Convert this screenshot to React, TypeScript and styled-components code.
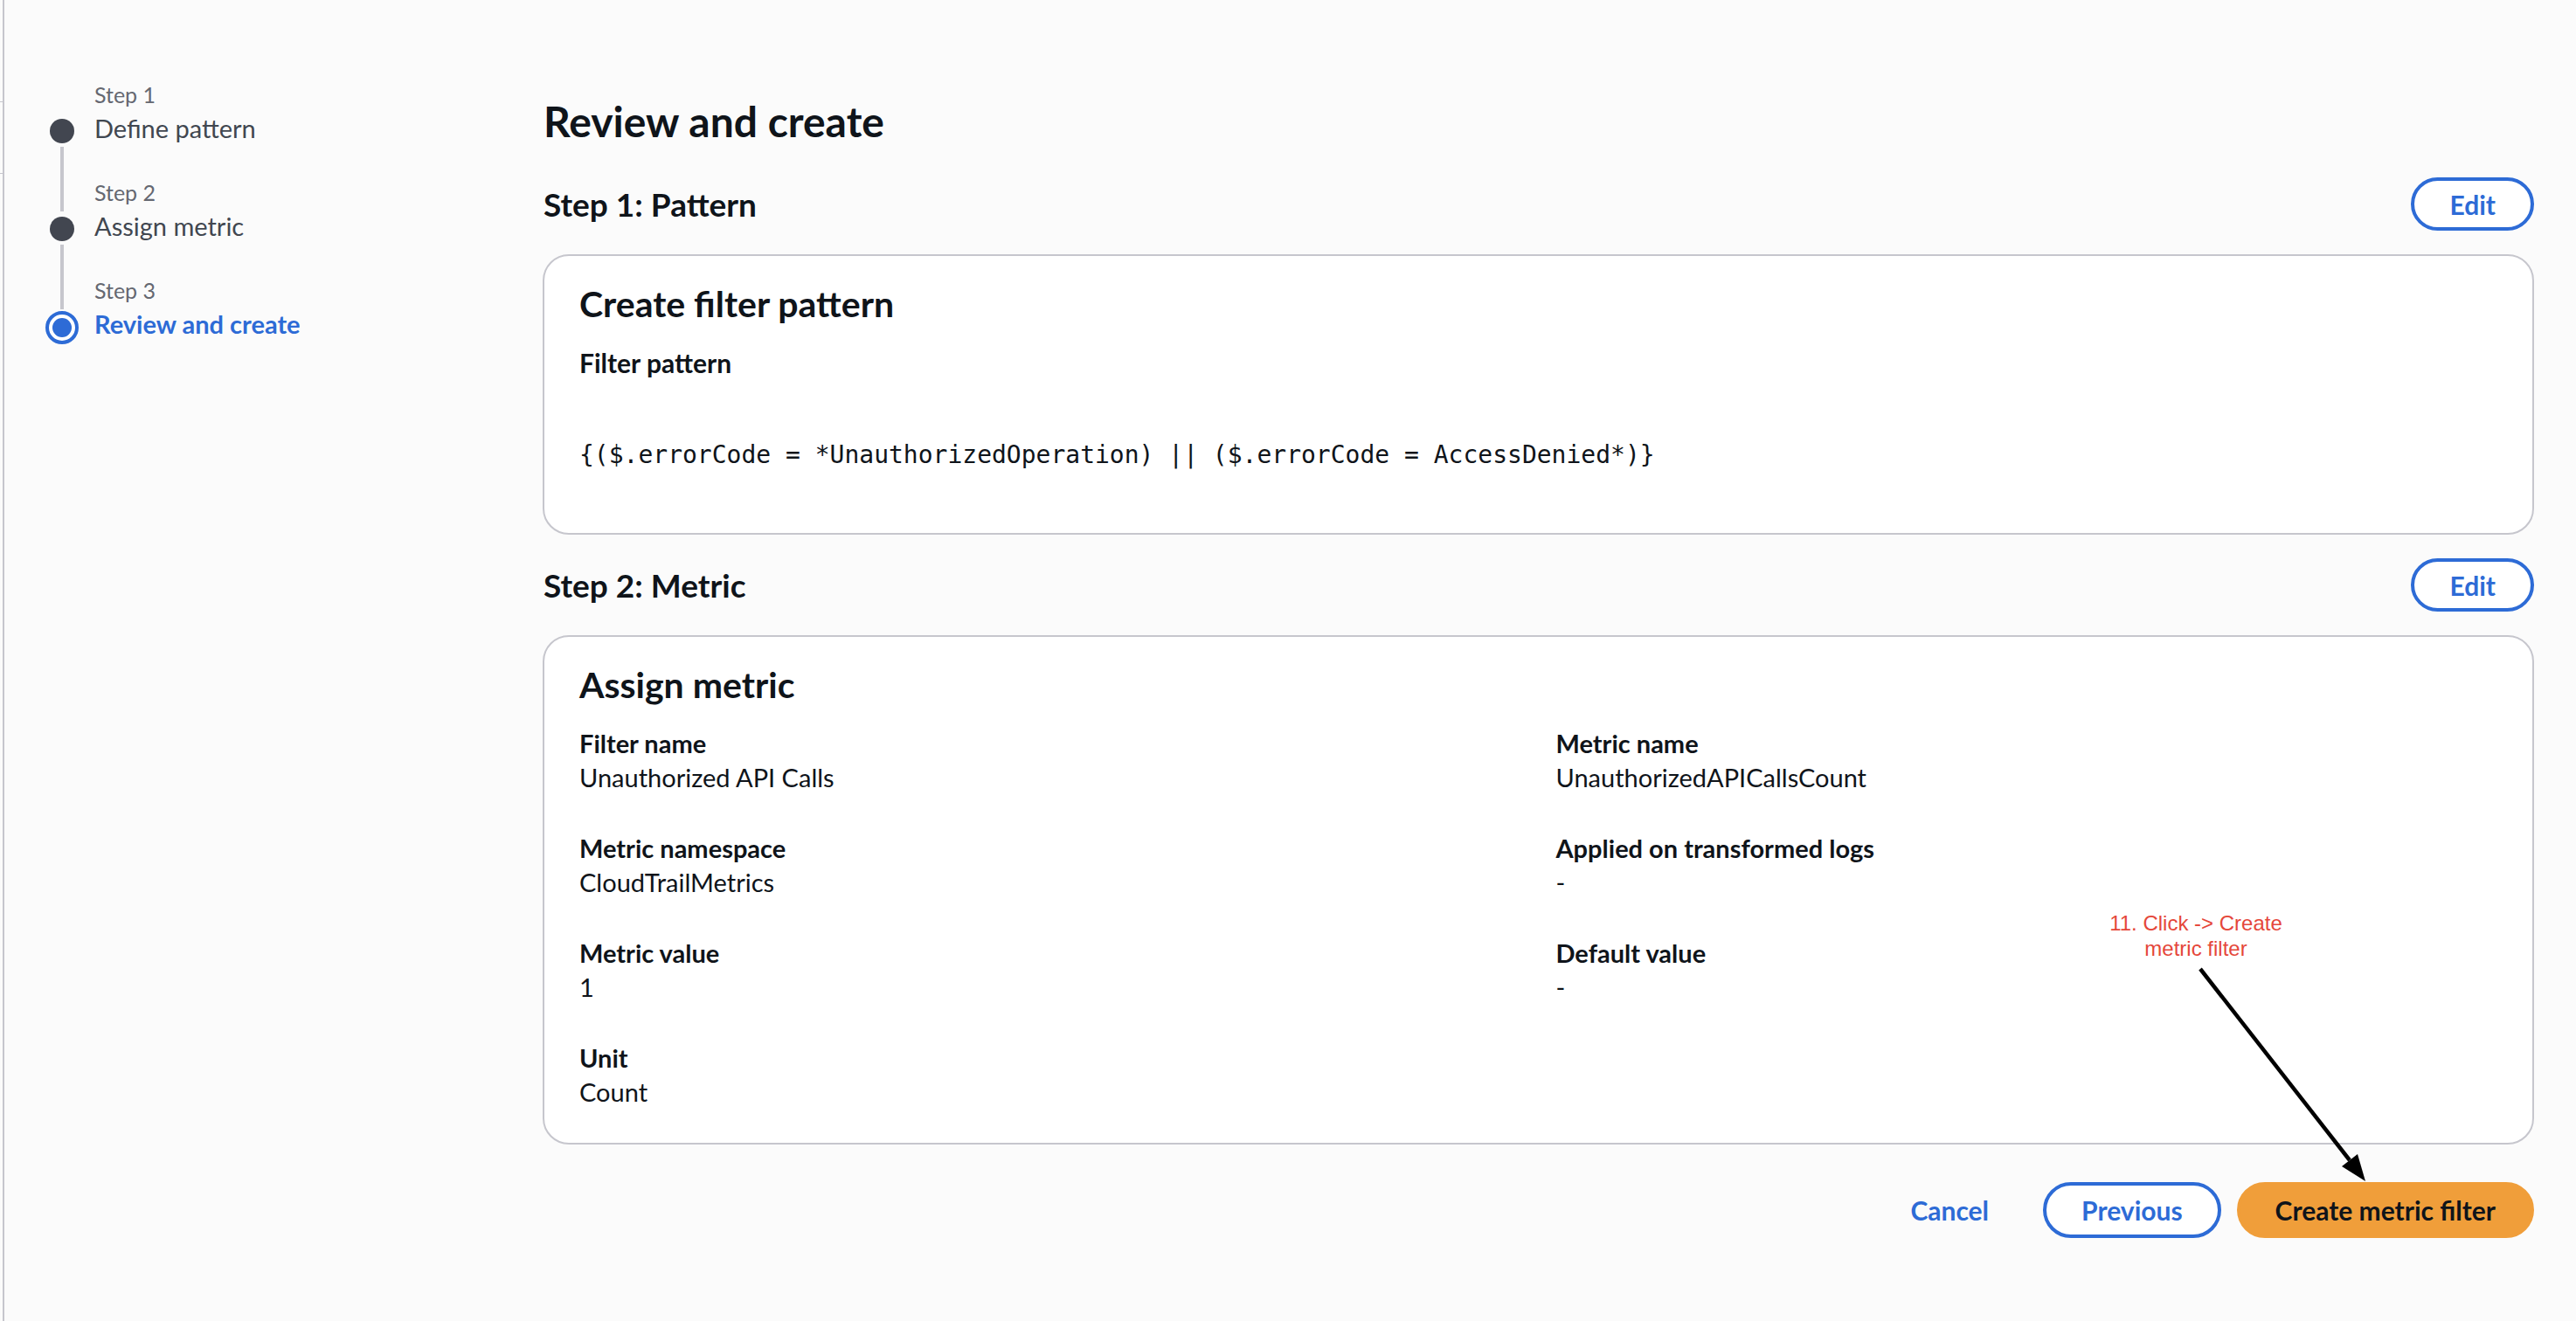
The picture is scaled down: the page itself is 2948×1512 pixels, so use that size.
import React from "react";
import styled, { createGlobalStyle } from "styled-components";

const BLUE = "#2d6bd6";
const BORDER = "#c6c6cd";

const GlobalStyle = createGlobalStyle`
  html, body {
    margin: 0;
    padding: 0;
    background: #fbfbfb;
  }
  body {
    font-family: Lato, "Open Sans", "Noto Sans", sans-serif;
    color: #0f141a;
  }
  *, *::before, *::after { box-sizing: border-box; }
`;

const Shell = styled.div`
  position: relative;
  display: flex;
  width: 2948px;
  height: 1512px;
  overflow: hidden;
  background: #fbfbfb;
`;

const Gutter = styled.div`
  flex: 0 0 3px;
  display: flex;
  flex-direction: column;
  gap: 81px;
  padding-top: 116px;
`;

const Tick = styled.span`
  display: block;
  height: 1px;
  background: ${BORDER};
`;

const Page = styled.div`
  flex: 1;
  display: flex;
  border-left: 2px solid ${BORDER};
  padding-right: 48px;
`;

/* ---------- Side navigation (wizard steps) ---------- */

const Nav = styled.nav`
  flex: 0 0 616px;
  padding: 94px 0 0 47px;
`;

const StepList = styled.ol`
  list-style: none;
  margin: 0;
  padding: 0;
`;

const StepItem = styled.li`
  display: grid;
  grid-template-columns: 38px auto;
  grid-template-rows: auto auto;
  column-gap: 18px;
`;

const Connector = styled.span`
  grid-column: 1;
  grid-row: 1;
  justify-self: center;
  align-self: stretch;
  width: 4px;
  margin-bottom: 2px;
  background: ${BORDER};
`;

const StepLabel = styled.span<{ $first?: boolean }>`
  grid-column: 2;
  grid-row: 1;
  padding: ${(p) => (p.$first ? 0 : 38)}px 0 10px;
  font-size: 25px;
  line-height: 28px;
  color: #656871;
`;

const Indicator = styled.span`
  grid-column: 1;
  grid-row: 2;
  justify-self: center;
  align-self: center;
  display: flex;
  align-items: center;
  justify-content: center;
`;

const Dot = styled.span`
  display: block;
  width: 28px;
  height: 28px;
  border-radius: 50%;
  background: #424650;
`;

const ActiveRing = styled.span`
  display: flex;
  align-items: center;
  justify-content: center;
  width: 38px;
  height: 38px;
  border-radius: 50%;
  border: 4px solid ${BLUE};
  background: #ffffff;
`;

const ActiveDot = styled.span`
  display: block;
  width: 22px;
  height: 22px;
  border-radius: 50%;
  background: ${BLUE};
`;

const StepTitle = styled.span<{ $active?: boolean }>`
  grid-column: 2;
  grid-row: 2;
  padding-bottom: 6px;
  font-size: 29px;
  line-height: 30px;
  font-weight: ${(p) => (p.$active ? 700 : 400)};
  color: ${(p) => (p.$active ? BLUE : "#414750")};
`;

/* ---------- Main content ---------- */

const Main = styled.main`
  flex: 1;
  display: flex;
  flex-direction: column;
  padding-top: 109px;
  min-width: 0;
`;

const PageTitle = styled.h1`
  margin: 0 0 0 1px;
  font-size: 48px;
  line-height: 60px;
  font-weight: 700;
`;

const SectionHeader = styled.div<{ $top: number }>`
  display: flex;
  align-items: center;
  justify-content: space-between;
  margin-top: ${(p) => p.$top}px;
`;

const SectionTitle = styled.h2`
  margin: 0 0 0 1px;
  font-size: 37px;
  line-height: 40px;
  font-weight: 700;
`;

const OutlineButton = styled.button<{ $h: number }>`
  height: ${(p) => p.$h}px;
  padding: 0 40px;
  border: 4px solid ${BLUE};
  border-radius: 999px;
  background: #ffffff;
  color: ${BLUE};
  font-family: inherit;
  font-size: 30px;
  font-weight: 700;
  cursor: pointer;
`;

const LinkButton = styled.button`
  height: 64px;
  padding: 0 44px;
  border: none;
  background: transparent;
  color: ${BLUE};
  font-family: inherit;
  font-size: 30px;
  font-weight: 700;
  cursor: pointer;
`;

const PrimaryButton = styled.button`
  height: 64px;
  padding: 0 40px;
  border: 4px solid #f09e3a;
  border-radius: 999px;
  background: #f09e3a;
  color: #0f141a;
  font-family: inherit;
  font-size: 30px;
  font-weight: 700;
  cursor: pointer;
`;

const Card = styled.section<{ $pb: number }>`
  margin-top: 27px;
  border: 2px solid ${BORDER};
  border-radius: 30px;
  background: #ffffff;
  padding: 31px 40px ${(p) => p.$pb}px;
`;

const CardTitle = styled.h3`
  margin: 0;
  font-size: 41px;
  line-height: 48px;
  font-weight: 700;
`;

const FieldLabel = styled.div`
  font-size: 29px;
  line-height: 32px;
  font-weight: 700;
`;

const FieldValue = styled.div`
  margin-top: 7px;
  font-size: 29px;
  line-height: 32px;
  font-weight: 400;
`;

const PatternLabel = styled(FieldLabel)`
  margin-top: 27px;
  font-size: 30px;
`;

const CodeValue = styled.div`
  padding: 70px 0 35px;
  font-family: "DejaVu Sans Mono", "Liberation Mono", monospace;
  font-size: 28px;
  line-height: 40px;
  white-space: pre;
`;

const FieldGrid = styled.div`
  margin-top: 27px;
  display: grid;
  grid-template-columns: 1fr 1fr;
  column-gap: 40px;
  row-gap: 49px;
`;

const Field = styled.div`
  display: flex;
  flex-direction: column;
`;

const Footer = styled.div`
  margin-top: 43px;
  display: flex;
  justify-content: flex-end;
  align-items: center;
  gap: 18px;
`;

/* ---------- Annotation overlay ---------- */

const AnnotationText = styled.div`
  position: absolute;
  left: 2363px;
  top: 1042px;
  width: 300px;
  text-align: center;
  font-family: "Liberation Sans", Arial, sans-serif;
  font-size: 24px;
  line-height: 29px;
  color: #e5473a;
`;

const ArrowLayer = styled.svg`
  position: absolute;
  left: 0;
  top: 0;
  pointer-events: none;
`;

type Step = { label: string; title: string; active?: boolean };

const steps: Step[] = [
  { label: "Step 1", title: "Define pattern" },
  { label: "Step 2", title: "Assign metric" },
  { label: "Step 3", title: "Review and create", active: true },
];

const fields: { label: string; value: string }[] = [
  { label: "Filter name", value: "Unauthorized API Calls" },
  { label: "Metric name", value: "UnauthorizedAPICallsCount" },
  { label: "Metric namespace", value: "CloudTrailMetrics" },
  { label: "Applied on transformed logs", value: "-" },
  { label: "Metric value", value: "1" },
  { label: "Default value", value: "-" },
  { label: "Unit", value: "Count" },
];

export default function App() {
  return (
    <>
      <GlobalStyle />
      <Shell>
        <Gutter>
          <Tick />
          <Tick />
        </Gutter>
        <Page>
          <Nav>
            <StepList>
              {steps.map((s, i) => (
                <StepItem key={s.label}>
                  {i > 0 && <Connector />}
                  <StepLabel $first={i === 0}>{s.label}</StepLabel>
                  <Indicator>
                    {s.active ? (
                      <ActiveRing>
                        <ActiveDot />
                      </ActiveRing>
                    ) : (
                      <Dot />
                    )}
                  </Indicator>
                  <StepTitle $active={s.active}>{s.title}</StepTitle>
                </StepItem>
              ))}
            </StepList>
          </Nav>

          <Main>
            <PageTitle>Review and create</PageTitle>

            <SectionHeader $top={34}>
              <SectionTitle>Step 1: Pattern</SectionTitle>
              <OutlineButton $h={61}>Edit</OutlineButton>
            </SectionHeader>
            <Card $pb={34}>
              <CardTitle>Create filter pattern</CardTitle>
              <PatternLabel>Filter pattern</PatternLabel>
              <CodeValue>
                {"{($.errorCode = *UnauthorizedOperation) || ($.errorCode = AccessDenied*)}"}
              </CodeValue>
            </Card>

            <SectionHeader $top={27}>
              <SectionTitle>Step 2: Metric</SectionTitle>
              <OutlineButton $h={61}>Edit</OutlineButton>
            </SectionHeader>
            <Card $pb={42}>
              <CardTitle>Assign metric</CardTitle>
              <FieldGrid>
                {fields.map((f) => (
                  <Field key={f.label}>
                    <FieldLabel>{f.label}</FieldLabel>
                    <FieldValue>{f.value}</FieldValue>
                  </Field>
                ))}
              </FieldGrid>
            </Card>

            <Footer>
              <LinkButton>Cancel</LinkButton>
              <OutlineButton $h={64}>Previous</OutlineButton>
              <PrimaryButton>Create metric filter</PrimaryButton>
            </Footer>
          </Main>
        </Page>

        <AnnotationText>
          11. Click -&gt; Create
          <br />
          metric filter
        </AnnotationText>
        <ArrowLayer width={2948} height={1512} viewBox="0 0 2948 1512">
          <line x1={2518} y1={1109} x2={2689} y2={1328} stroke="#000" strokeWidth={4.5} />
          <polygon points="2707,1352 2680,1335 2698,1321" fill="#000" />
        </ArrowLayer>
      </Shell>
    </>
  );
}
